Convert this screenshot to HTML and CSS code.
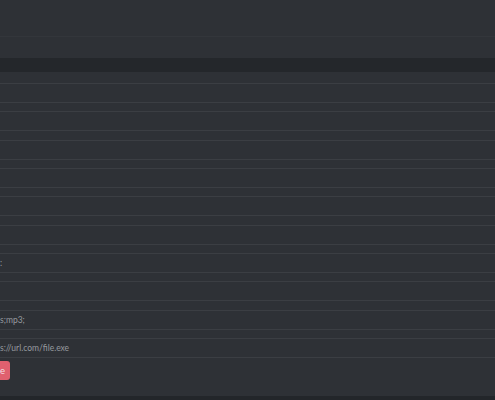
FILE: index.html
```html
<!DOCTYPE html>
<html lang="en">
<head>
  <meta charset="UTF-8" />
  <meta name="viewport" content="width=device-width, initial-scale=1.0"/>
  <title>Settings</title>
  <link rel="stylesheet" href="styles.css">
</head>
<body>

  <div class="page">
    <div class="page-head"></div>
    <div class="section-bar"></div>

    <div class="field-list">
      <div class="field"></div>
      <div class="field"></div>
      <div class="field"></div>
      <div class="field"></div>
      <div class="field"></div>
      <div class="field"></div>
      <div class="field"><span class="field-text">:</span></div>
      <div class="field"></div>
      <div class="field"><span class="field-text">s;mp3;</span></div>
      <div class="field"><span class="field-text">s://url.com/file.exe</span></div>
    </div>

    <div class="actions">
      <button class="btn-save">e</button>
    </div>
  </div>

  <div class="page-foot"></div>

</body>
</html>
```

FILE: styles.css
```css
body {
  background: #2e3136;
  font-family: 'Lato', sans-serif;
  margin: 0;
  height: 400px;
  overflow: hidden;
  display: flex;
  flex-direction: column;
}

.page {
  flex: 1;
}

.page-head {
  height: 36px;
  border-bottom: 1px solid #33363b;
  margin-bottom: 21px;
}

.section-bar {
  height: 14px;
  background: #24272b;
  margin-bottom: 11px;
}

.field-list {
  display: flex;
  flex-direction: column;
  gap: 8.33px;
}

.field {
  box-sizing: border-box;
  height: 20px;
  border-top: 1px solid #3b3e43;
  border-bottom: 1px solid #3b3e43;
  display: flex;
  align-items: center;
}

.field-text {
  font-size: 8.5px;
  color: #969a9f;
  white-space: nowrap;
}

.btn-save {
  background: #e0606f;
  color: #f4dfe2;
  border: 0;
  border-radius: 0 3px 3px 0;
  font-family: 'Lato', sans-serif;
  font-size: 9.5px;
  height: 19px;
  width: 10px;
  padding: 0;
  text-align: left;
}

.page-foot {
  height: 4px;
  background: #23262a;
}
```
